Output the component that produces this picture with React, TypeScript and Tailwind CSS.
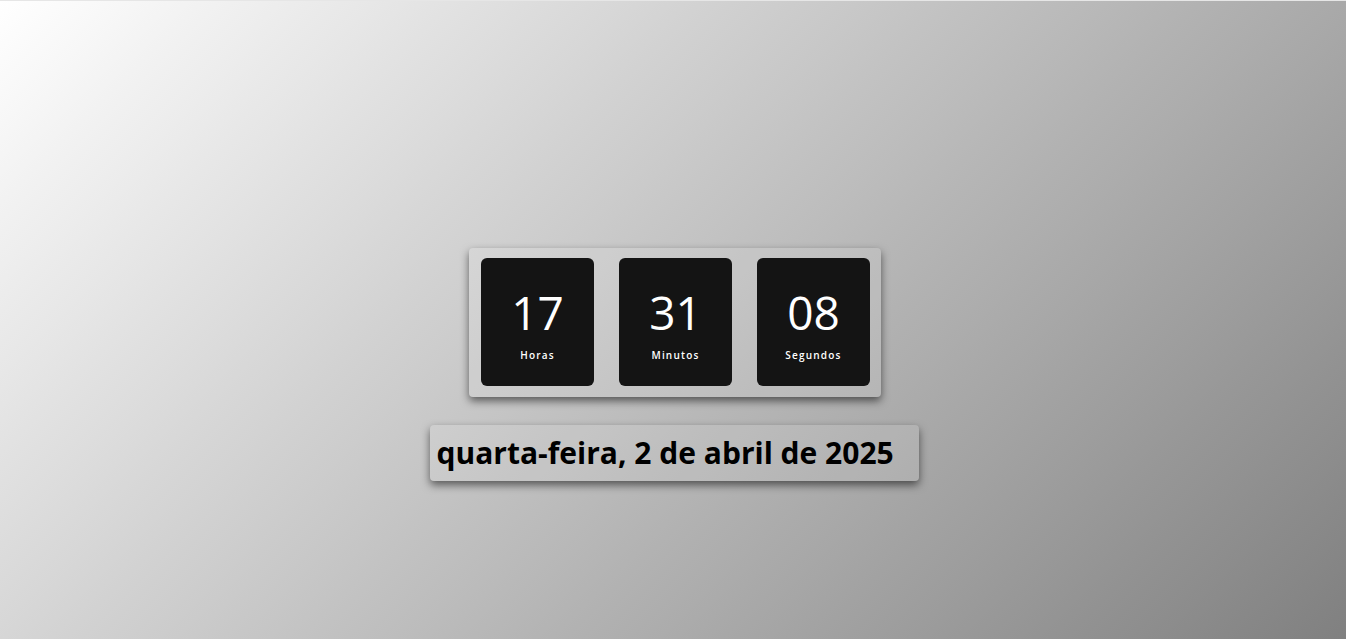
import React from 'react';

const units = [
  { value: '17', label: 'Horas' },
  { value: '31', label: 'Minutos' },
  { value: '08', label: 'Segundos' },
];

export default function App() {
  return (
    <div
      className="h-screen w-full flex flex-col items-center pt-[247px] border-t border-[#e6e6e6] bg-[linear-gradient(135deg,#ffffff,#808080)]"
      style={{ fontFamily: '"Open Sans", sans-serif' }}
    >
      {/* Clock panel */}
      <div className="flex gap-[25px] pl-[12px] pr-[11px] pt-[10px] pb-[11px] ml-[4px] rounded-[4px] bg-white/10 shadow-[0_4px_8px_rgba(0,0,0,0.55)]">
        {units.map((u) => (
          <div
            key={u.label}
            className="w-[113px] h-[128px] rounded-[6px] bg-[#141414] flex flex-col items-center pt-[31px]"
          >
            <span className="text-[46px] leading-[46px] text-white font-normal">{u.value}</span>
            <span className="mt-[13px] text-[10px] leading-[14px] font-semibold tracking-[1.2px] text-white">
              {u.label}
            </span>
          </div>
        ))}
      </div>

      {/* Date */}
      <div className="mt-[28px] ml-[2px] w-[489px] h-[56px] flex items-center pl-[7px] rounded-[4px] bg-white/10 shadow-[0_4px_8px_rgba(0,0,0,0.55)]">
        <span className="text-[30px] font-bold text-black leading-none">quarta-feira, 2 de abril de 2025</span>
      </div>
    </div>
  );
}
